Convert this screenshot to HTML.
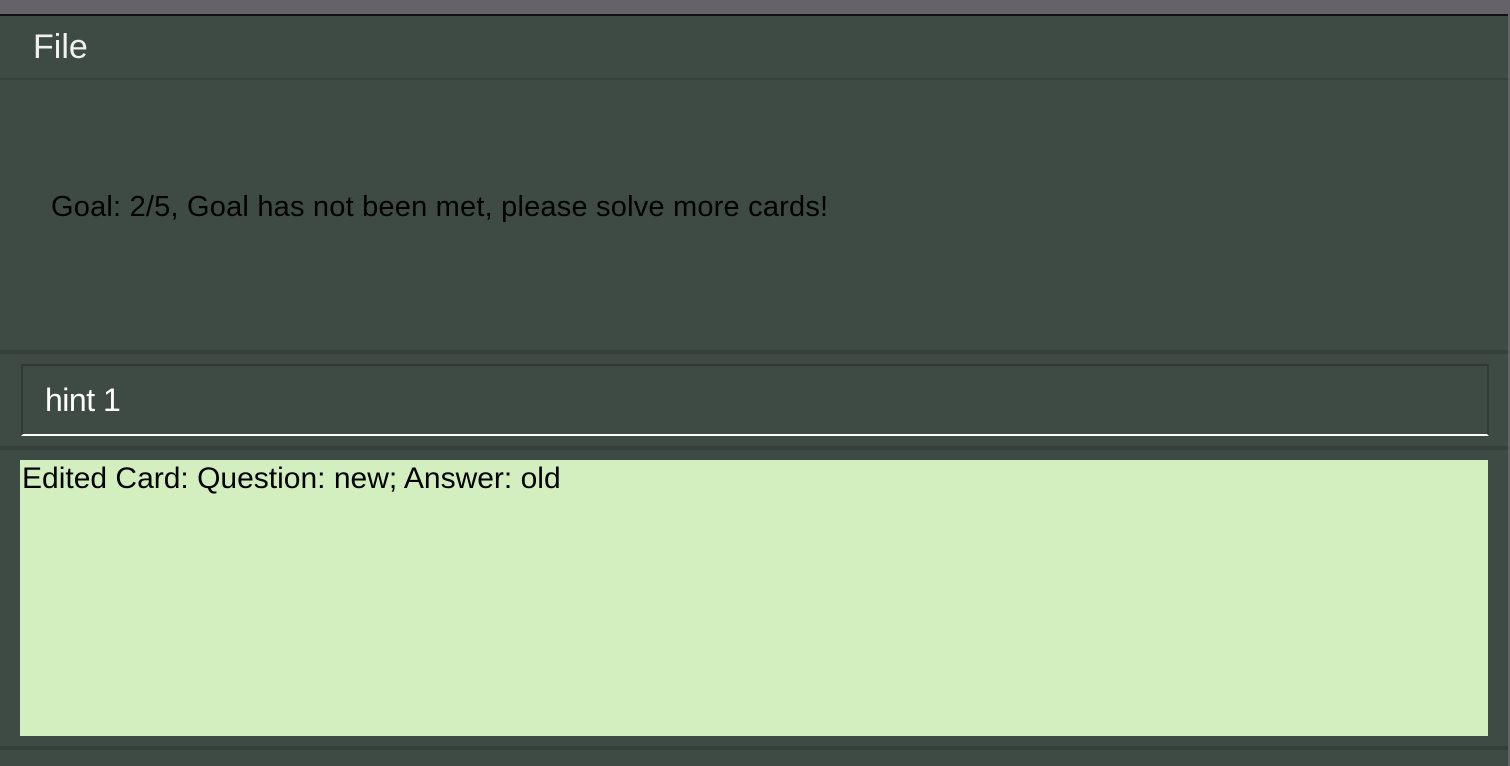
<!DOCTYPE html>
<html><head><style>
body{margin:0;width:1510px;height:766px;background:#3e4b45;overflow:hidden;font-family:"Liberation Sans",sans-serif;position:relative}
div{position:absolute;box-sizing:border-box}
</style></head><body>
<div style="left:0;top:0;width:1510px;height:14px;background:#65626a"></div>
<div style="left:0;top:14px;width:1510px;height:2px;background:#111"></div>
<div style="left:33px;top:27px;font-size:34px;color:#f0f0f0;line-height:40px">File</div>
<div style="left:0;top:78px;width:1510px;height:2px;background:#374039"></div>
<div style="left:51px;top:190px;font-size:29px;color:#000;line-height:34px;letter-spacing:0.2px">Goal: 2/5, Goal has not been met, please solve more cards!</div>
<div style="left:0;top:350px;width:1510px;height:4px;background:#36403a"></div>
<div style="left:21px;top:364px;width:1468px;height:72px;border:2px solid #333a36;border-bottom:2px solid #fff"></div>
<div style="left:45px;top:381px;font-size:32px;color:#fff;line-height:38px;letter-spacing:-0.5px">hint 1</div>
<div style="left:0;top:446px;width:1510px;height:4px;background:#36403a"></div>
<div style="left:20px;top:460px;width:1468px;height:276px;background:#d3efc0"></div>
<div style="left:22px;top:462px;font-size:30px;color:#000;line-height:34px">Edited Card: Question: new; Answer: old</div>
<div style="left:0;top:746px;width:1510px;height:4px;background:#36403a"></div>
<div style="left:1508px;top:0;width:2px;height:766px;background:#65626a"></div>
</body></html>
